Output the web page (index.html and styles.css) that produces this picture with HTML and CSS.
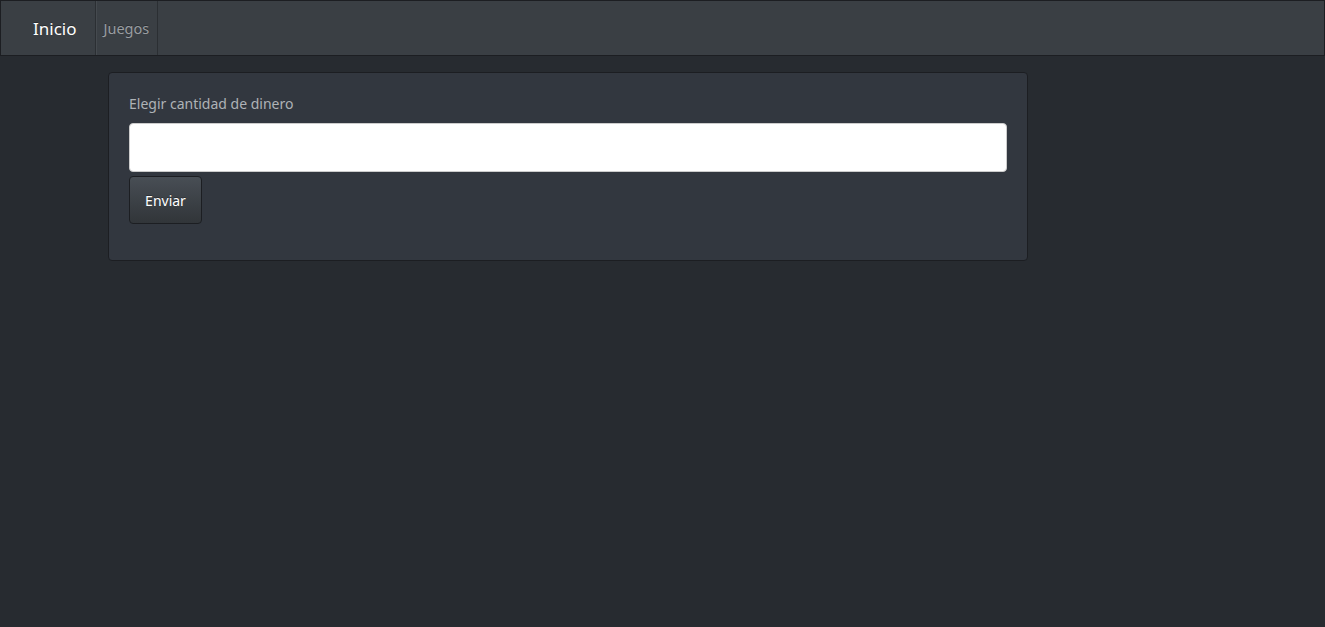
FILE: index.html
```html
<!DOCTYPE html>
<html lang="es">
<head>
<meta charset="utf-8">
<title>Inicio</title>
<link rel="stylesheet" href="styles.css">
</head>
<body>
<nav class="navbar">
  <a class="brand" href="#">Inicio</a>
  <ul class="nav">
    <li><a href="#">Juegos</a></li>
  </ul>
</nav>
<main class="container">
  <form class="card">
    <label class="label" for="dinero">Elegir cantidad de dinero</label>
    <input class="input" id="dinero" type="text">
    <button class="btn" type="button">Enviar</button>
  </form>
</main>
</body>
</html>
```
FILE: styles.css
```css
* { box-sizing: border-box; }
html, body { margin: 0; padding: 0; }
body {
  background: #272b30;
  color: #c8c8c8;
  font-family: "Segoe UI", "Noto Sans", "Open Sans", sans-serif;
  font-size: 14px;
  height: 627px;
}
.navbar {
  display: flex;
  align-items: stretch;
  height: 56px;
  background: #3a3f44;
  border: 1px solid #1c1e22;
  padding-left: 16px;
}
.brand {
  display: flex;
  align-items: center;
  padding: 0 18px 0 16px;
  color: #fff;
  font-size: 17px;
  text-decoration: none;
  text-shadow: 0 -1px 0 rgba(0,0,0,0.3);
}
.nav {
  display: flex;
  margin: 0;
  padding: 0;
  list-style: none;
}
.nav li { display: flex; }
.nav a {
  display: flex;
  align-items: center;
  padding: 0 8px 0 8px;
  color: #999da1;
  font-size: 14.5px;
  text-decoration: none;
  border-left: 1px solid #2b2f33;
  border-right: 1px solid #2b2f33;
  box-shadow: inset 1px 0 0 rgba(255,255,255,0.06);
  text-shadow: 0 -1px 0 rgba(0,0,0,0.3);
}
.container {
  padding: 16px 0 0 108px;
}
.card {
  display: flex;
  flex-direction: column;
  align-items: flex-start;
  width: 920px;
  height: 189px;
  background: #32373f;
  border: 1px solid #1c1e22;
  border-radius: 4px;
  padding: 21px 20px 0 20px;
}
.label {
  color: #aeb2b6;
  line-height: 20px;
  margin-bottom: 9px;
}
.input {
  width: 878px;
  height: 49px;
  background: #fff;
  border: 1px solid #ccc;
  border-radius: 4px;
  margin: 0 0 4px 0;
  font-size: 14px;
}
.btn {
  width: 73px;
  height: 48px;
  border: 1px solid #1c1e22;
  border-radius: 4px;
  background: linear-gradient(#484e55, #3a3f44 60%, #313539);
  color: #fff;
  font-family: inherit;
  font-size: 14px;
  text-shadow: 0 -1px 0 rgba(0,0,0,0.3);
  padding: 0;
}
```
